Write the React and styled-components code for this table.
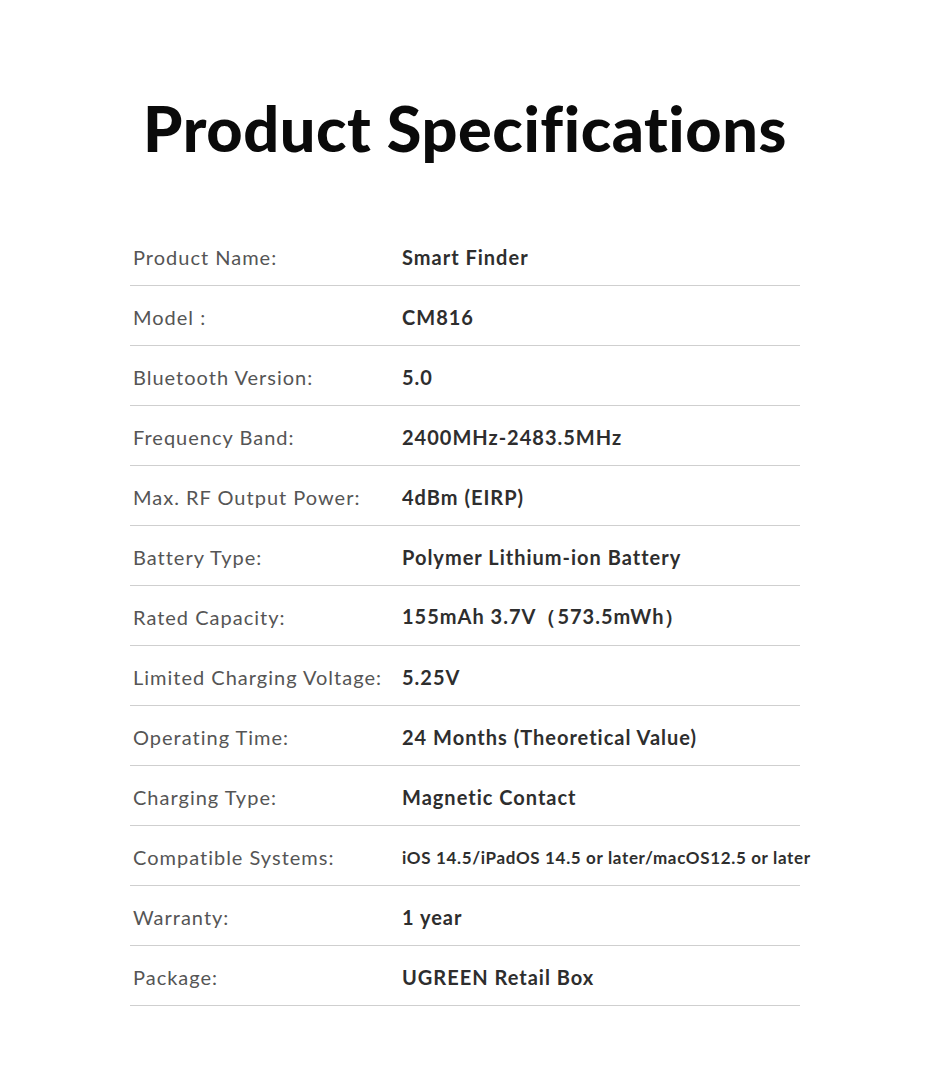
import React from 'react';
import styled, { createGlobalStyle } from 'styled-components';

const Global = createGlobalStyle`
  html, body {
    margin: 0;
    padding: 0;
    background: #fff;
  }
  body {
    font-family: Lato, "Liberation Sans", sans-serif;
    -webkit-font-smoothing: antialiased;
  }
`;

const Page = styled.div`
  width: 930px;
  height: 1070px;
  background: #fff;
  display: flex;
  flex-direction: column;
  align-items: center;
`;

const Title = styled.h1`
  margin: 96px 0 0;
  font-size: 63px;
  line-height: 64px;
  font-weight: 900;
  color: #0a0a0a;
  letter-spacing: 0.55px;
`;

const Table = styled.div`
  margin-top: 66px;
  width: 670px;
`;

const Row = styled.div`
  display: grid;
  grid-template-columns: 272px 1fr;
  align-items: center;
  box-sizing: border-box;
  height: 60px;
  padding-top: 3px;
  border-bottom: 1px solid #cfcfcf;
`;

const Label = styled.div`
  padding-left: 3px;
  font-size: 20px;
  color: #555;
  white-space: nowrap;
  letter-spacing: 1px;
`;

const Value = styled.div`
  font-size: ${p => (p.$small ? '17px' : '20px')};
  font-weight: 700;
  color: #2e2e2e;
  white-space: nowrap;
  letter-spacing: ${p => (p.$small ? '0.65px' : '1px')};
`;

const specs = [
  ['Product Name:', 'Smart Finder'],
  ['Model :', 'CM816'],
  ['Bluetooth Version:', '5.0'],
  ['Frequency Band:', '2400MHz-2483.5MHz'],
  ['Max. RF Output Power:', '4dBm (EIRP)'],
  ['Battery Type:', 'Polymer Lithium-ion Battery'],
  ['Rated Capacity:', '155mAh 3.7V（573.5mWh）'],
  ['Limited Charging Voltage:', '5.25V'],
  ['Operating Time:', '24 Months (Theoretical Value)'],
  ['Charging Type:', 'Magnetic Contact'],
  ['Compatible Systems:', 'iOS 14.5/iPadOS 14.5 or later/macOS12.5 or later', true],
  ['Warranty:', '1 year'],
  ['Package:', 'UGREEN Retail Box'],
];

export default function App() {
  return (
    <Page>
      <Global />
      <Title>Product Specifications</Title>
      <Table>
        {specs.map(([label, value, small]) => (
          <Row key={label}>
            <Label>{label}</Label>
            <Value $small={small}>{value}</Value>
          </Row>
        ))}
      </Table>
    </Page>
  );
}
